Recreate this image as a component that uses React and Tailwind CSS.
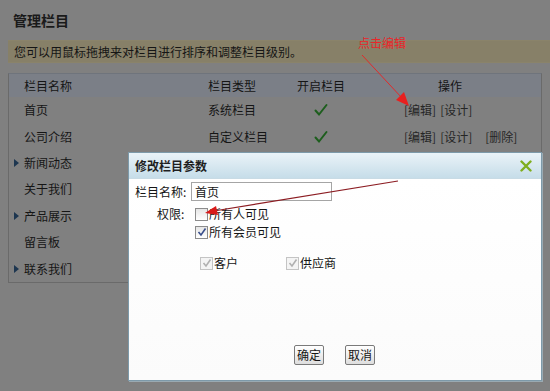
import React from "react";

const rows = [
  { name: "首页", type: "系统栏目", open: true, actions: ["[编辑]", "[设计]"] },
  { name: "公司介绍", type: "自定义栏目", open: true, actions: ["[编辑]", "[设计]", "[删除]"] },
  { name: "新闻动态", arrow: true },
  { name: "关于我们" },
  { name: "产品展示", arrow: true },
  { name: "留言板" },
  { name: "联系我们", arrow: true },
];

function Check() {
  return (
    <svg width="14" height="14" viewBox="0 0 14 14">
      <path d="M1.5 7.5 L5 11.5 L12.5 2" fill="none" stroke="#1d5e1d" strokeWidth="2" strokeLinecap="round" />
    </svg>
  );
}

function Box({ checked, disabled }) {
  return (
    <span
      className={`flex h-[13px] w-[13px] items-center justify-center border ${
        disabled ? "border-[#c4c4c4] bg-[#f4f4f4]" : "border-[#8c8c8c] bg-gradient-to-b from-[#e6e6e6] to-white"
      }`}
    >
      {checked && (
        <svg width="10" height="10" viewBox="0 0 10 10">
          <path
            d="M1.5 5 L4 8 L8.5 1.5"
            fill="none"
            stroke={disabled ? "#b0b0b0" : "#3a4f8c"}
            strokeWidth="1.6"
          />
        </svg>
      )}
    </span>
  );
}

export default function App() {
  return (
    <div
      className="relative h-[391px] w-[550px] overflow-hidden bg-[#808080] text-[12px] text-[#151515]"
      style={{ fontFamily: '"Noto Sans CJK SC", "Noto Sans", sans-serif' }}
    >
      <h1 className="pl-[13px] pt-[10px] text-[14px] font-bold leading-[20px] text-[#1a1a1a]">管理栏目</h1>

      <div className="ml-[8px] mt-[10px] flex h-[23px] items-center border-y border-[#8a836a] bg-[#878068] pl-[6px]">
        您可以用鼠标拖拽来对栏目进行排序和调整栏目级别。
      </div>

      <div className="ml-[8px] mt-[10px] w-[534px] border border-[#6a6a6a] border-t-[#6f747c]">
        <div className="flex h-[23px] items-center bg-[#7b7f87]">
          <div className="w-[192px] pl-[15px]">栏目名称</div>
          <div className="w-[90px] pl-[7px]">栏目类型</div>
          <div className="w-[60px] text-center">开启栏目</div>
          <div className="flex-1 pl-[87px]">操作</div>
        </div>
        {rows.map((r) => (
          <div key={r.name} className="flex h-[26.4px] items-center">
            <div className="relative w-[192px] pl-[15px]">
              {r.arrow && (
                <span className="absolute left-[5px] top-1/2 -translate-y-1/2 border-y-[4px] border-l-[5px] border-y-transparent border-l-[#1d3650]" />
              )}
              {r.name}
            </div>
            <div className="w-[90px] pl-[7px]">{r.type}</div>
            <div className="flex w-[60px] justify-center">{r.open && <Check />}</div>
            <div className="flex flex-1 gap-[4px] pl-[53px] text-[#262626]">
              {r.actions &&
                r.actions.map((a, i) => (
                  <span key={a} className={i === 2 ? "ml-[9px]" : ""}>
                    {a}
                  </span>
                ))}
            </div>
          </div>
        ))}
      </div>

      <div className="absolute left-[358px] top-[35px] text-[12px] leading-[16px] text-[#e8262a]">点击编辑</div>

      <div className="absolute left-[128px] top-[152px] flex h-[229px] w-[414px] flex-col border border-[#7d9aaa] bg-white shadow-[1px_1px_0_#9aaab2]">
        <div className="flex h-[26px] items-center justify-between border-b border-[#c8dbe5] bg-gradient-to-b from-[#eaf3f8] to-[#c6dde9] pl-[6px] pr-[9px]">
          <span className="text-[12px] font-bold text-[#1f1f1f]">修改栏目参数</span>
          <svg width="12" height="12" viewBox="0 0 12 12">
            <path d="M1.5 1.5 L10.5 10.5 M10.5 1.5 L1.5 10.5" stroke="#7fae1f" strokeWidth="2.4" strokeLinecap="round" />
          </svg>
        </div>
        <div className="flex flex-1 flex-col bg-gradient-to-b from-white to-[#fbfbfb] pl-[6px]">
          <div className="mt-[3px] flex h-[19px] items-center">
            <span className="w-[56px]">栏目名称:</span>
            <div className="flex h-[19px] w-[141px] items-center border border-[#a5a5a5] pl-[3px]">首页</div>
          </div>
          <div className="mt-[4px] flex h-[18px] items-center">
            <span className="w-[60px] pl-[22px]">权限:</span>
            <Box />
            <span className="ml-[1px]">所有人可见</span>
          </div>
          <div className="flex h-[18px] items-center pl-[60px]">
            <Box checked />
            <span className="ml-[1px]">所有会员可见</span>
          </div>
          <div className="mt-[13px] flex h-[18px] items-center pl-[65px]">
            <Box checked disabled />
            <span className="ml-[1px]">客户</span>
            <span className="ml-[48px]">
              <Box checked disabled />
            </span>
            <span className="ml-[1px]">供应商</span>
          </div>
          <div className="mt-auto mb-[15px] flex gap-[21px] pl-[159px]">
            <button className="h-[20px] w-[30px] rounded-[2px] border border-[#7a7a7a] bg-gradient-to-b from-white to-[#dedede] text-[12px]">确定</button>
            <button className="h-[20px] w-[30px] rounded-[2px] border border-[#7a7a7a] bg-gradient-to-b from-white to-[#dedede] text-[12px]">取消</button>
          </div>
        </div>
      </div>

      <svg className="absolute left-0 top-0" width="550" height="391">
        <line x1="362" y1="55" x2="402" y2="98" stroke="#e22a2a" strokeWidth="1" />
        <polygon points="409,106 396,100 404,92" fill="#e8201f" />
        <line x1="398" y1="181" x2="214" y2="211" stroke="#8c1c22" strokeWidth="1.2" />
        <polygon points="205,213 216,206 218,215" fill="#d81a1a" />
      </svg>
    </div>
  );
}
